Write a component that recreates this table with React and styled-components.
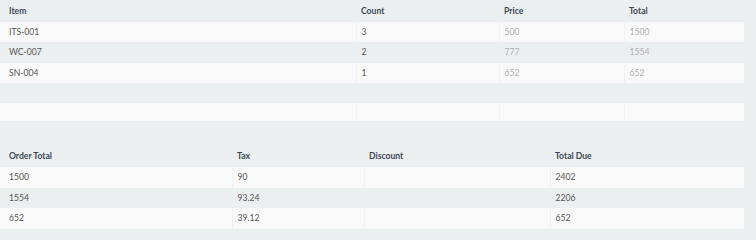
import React from 'react'
import styled, {createGlobalStyle} from 'styled-components'

const GlobalStyle = createGlobalStyle`
    html, body {
        margin: 0;
        padding: 0;
        background-color: #eceff0;
        font-family: Lato, "Open Sans", sans-serif;
    }
`

const Page = styled.div`
    width: 744px;
    display: flex;
    flex-direction: column;
`

const Table = styled.table`
    width: 744px;
    table-layout: fixed;
    border-collapse: collapse;
    border-spacing: 0;
    margin-top: ${props => props.$gap || 0}px;
    font-size: 8.6px;
`

const Cell = styled.td`
    padding: 0 0 0 ${props => props.$first ? 9 : 5}px;
    color: ${props => props.$muted ? '#b0b0b0' : '#555'};
    border-left: ${props => props.$first ? 'none' : '1px solid transparent'};
    vertical-align: middle;
    white-space: nowrap;
`

const Row = styled.tr`
    height: ${props => props.$h || 20.5}px;
    background-color: ${props => props.$light ? '#f9f9f9' : 'transparent'};
    & > ${Cell} {
        border-left-color: ${props => props.$light ? '#eff1f2' : 'transparent'};
    }
`

const HeadCell = styled.th`
    text-align: left;
    font-weight: 700;
    color: #3b4856;
    padding: 0 0 0 ${props => props.$first ? 9 : 5}px;
    vertical-align: middle;
`

const items = [
    ['ITS-001', '3', '500', '1500'],
    ['WC-007', '2', '777', '1554'],
    ['SN-004', '1', '652', '652'],
]

const orders = [
    ['1500', '90', '', '2402'],
    ['1554', '93.24', '', '2206'],
    ['652', '39.12', '', '652'],
]

export default function App(){
    return(<>
        <GlobalStyle/>
        <Page>
            <Table>
                <colgroup>
                    <col style={{width: 356}}/>
                    <col style={{width: 143}}/>
                    <col style={{width: 125}}/>
                    <col style={{width: 120}}/>
                </colgroup>
                <thead>
                    <Row $h={21.7}>
                        <HeadCell $first>Item</HeadCell>
                        <HeadCell>Count</HeadCell>
                        <HeadCell>Price</HeadCell>
                        <HeadCell>Total</HeadCell>
                    </Row>
                </thead>
                <tbody>
                    {items.map((it, i) => (
                        <Row key={it[0]} $light={i % 2 === 0}>
                            <Cell $first>{it[0]}</Cell>
                            <Cell>{it[1]}</Cell>
                            <Cell $muted>{it[2]}</Cell>
                            <Cell $muted>{it[3]}</Cell>
                        </Row>
                    ))}
                    <Row $h={19.7}>
                        <Cell $first/><Cell/><Cell/><Cell/>
                    </Row>
                    <Row $h={17.8} $light>
                        <Cell $first/><Cell/><Cell/><Cell/>
                    </Row>
                </tbody>
            </Table>
            <Table $gap={24.5}>
                <colgroup>
                    <col style={{width: 232}}/>
                    <col style={{width: 132}}/>
                    <col style={{width: 186}}/>
                    <col style={{width: 194}}/>
                </colgroup>
                <thead>
                    <Row $h={22}>
                        <HeadCell $first>Order Total</HeadCell>
                        <HeadCell>Tax</HeadCell>
                        <HeadCell>Discount</HeadCell>
                        <HeadCell>Total Due</HeadCell>
                    </Row>
                </thead>
                <tbody>
                    {orders.map((o, i) => (
                        <Row key={i} $light={i % 2 === 0}>
                            <Cell $first>{o[0]}</Cell>
                            <Cell>{o[1]}</Cell>
                            <Cell>{o[2]}</Cell>
                            <Cell>{o[3]}</Cell>
                        </Row>
                    ))}
                </tbody>
            </Table>
        </Page>
    </>)
}
